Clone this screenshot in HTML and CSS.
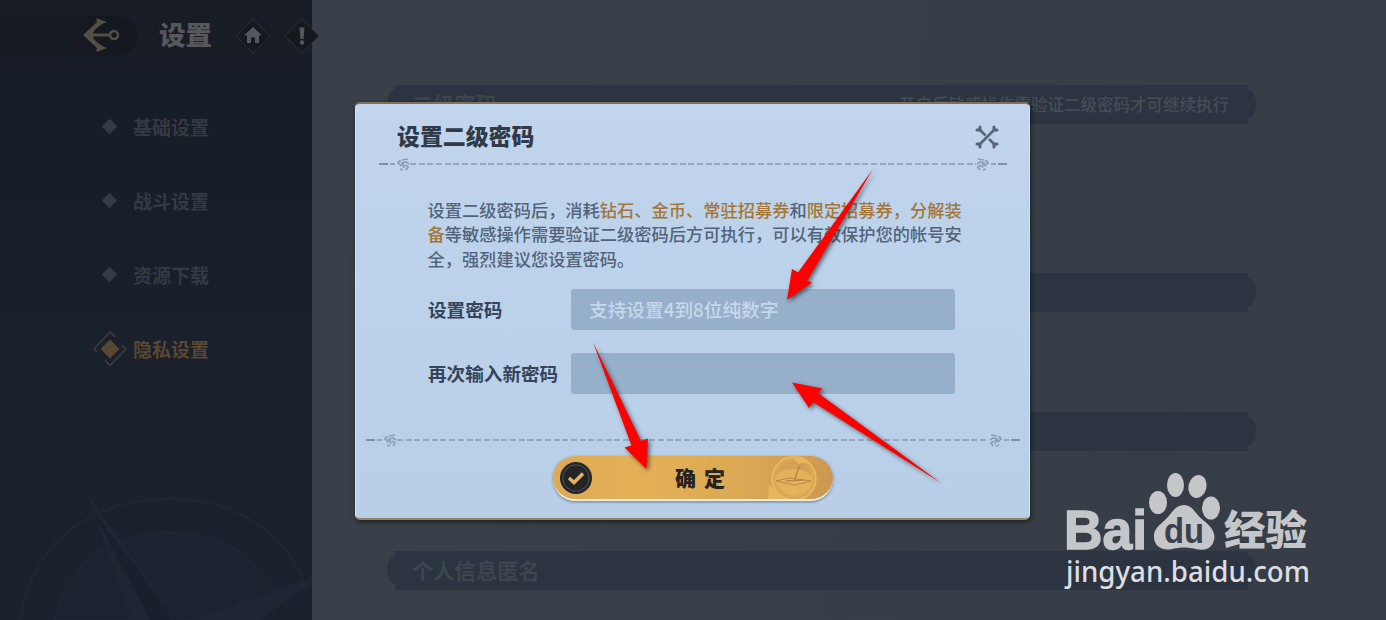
FILE: index.html
```
<!DOCTYPE html>
<html lang="zh-CN">
<head>
  <meta charset="UTF-8">
  <meta name="viewport" content="width=device-width, initial-scale=1.0">
  <title>设置二级密码</title>
  <link rel="stylesheet" href="styles.css">
</head>
<body>
  <div class="screen">
    <aside class="sidebar">
      <svg class="compass" viewBox="0 0 312 160">
        <path d="M20 160C35 75 95 39 172 39C236 39 282 72 303 118" fill="none" stroke="#1f2732" stroke-width="2"/>
        <path d="M55 160C70 95 115 73 172 73C218 73 252 92 270 128L200 160Z" fill="#1c2330" stroke="#1e2632" stroke-width="2"/>
        <path d="M88 36L177 160H131Z" fill="#1e2533"/>
        <path d="M92 50L177 160H150Z" fill="#19202b"/>
        <path d="M195 160L312 116V122L258 160Z" fill="#1e2533"/>
        <path d="M88 36L174 160M258 160L312 121" stroke="#212a36" fill="none"/>
      </svg>
      <header class="top-bar">
        <div class="back">
          <svg width="38" height="36" viewBox="0 0 38 36">
            <path d="M1 18L15 5L14 1L25 5Q19 7 16 10Q11 14 11 16.500H28V19.500H11Q11 22 16 26Q19 29 25 31L14 35L15 31Z" fill="#534f45"/>
            <circle cx="32" cy="18" r="4" fill="none" stroke="#534f45" stroke-width="2.5"/>
          </svg>
        </div>
        <h1>设置</h1>
        <svg class="top-icon" width="36" height="36" viewBox="0 0 36 36">
          <path d="M18 1L35 18L18 35L1 18Z" fill="#15181e" stroke="#292c32"/>
          <path d="M18 9L27 17.500H24V25H20V19.500H16V25H12V17.500H9Z" fill="#56585b"/>
        </svg>
        <svg class="top-icon" width="36" height="36" viewBox="0 0 36 36">
          <path d="M18 1L35 18L18 35L1 18Z" fill="#15181e" stroke="#2c3036"/>
          <path d="M15.500 9.500H20.500L19.500 21H16.500Z" fill="#56585b"/>
          <circle cx="18" cy="24.500" r="2.200" fill="#56585b"/>
        </svg>
      </header>
      <nav class="menu">
        <div class="menu-item"><span class="diamond"></span>基础设置</div>
        <div class="menu-item"><span class="diamond"></span>战斗设置</div>
        <div class="menu-item"><span class="diamond"></span>资源下载</div>
        <div class="menu-item active">
          <svg class="marker" width="34" height="36" viewBox="0 0 34 36">
            <path d="M17 8.500L26.500 18L17 27.500L7.500 18Z" fill="#594730"/>
            <path d="M4 21L1 18L17 1L22 6M29 14L33 18L17 34.500L12 29" fill="none" stroke="#46403a" stroke-width="1.300"/>
          </svg>隐私设置
        </div>
      </nav>
    </aside>

    <main class="content">
      <section class="setting tall"><div class="bar"><span>二级密码</span><small>开启后敏感操作需验证二级密码才可继续执行</small></div></section>
      <section class="setting"><div class="bar"></div></section>
      <section class="setting"><div class="bar"></div></section>
      <section class="setting last"><div class="bar"><span>个人信息匿名</span></div></section>
    </main>

    <div class="dialog">
      <div class="dialog-header">
        <h2>设置二级密码</h2>
        <svg class="close" width="24" height="24" viewBox="0 0 24 24">
          <path d="M4 4L10.500 10.500M14 14L20 20M20 4L4 20" stroke="#56657a" stroke-width="2.600"/>
          <path d="M2 5H5V2M19 2V5H22M2 19H5V22M19 22V19H22" fill="none" stroke="#56657a" stroke-width="3" stroke-linecap="round" stroke-linejoin="round"/>
        </svg>
      </div>
      <div class="divider">
        <i></i><svg class="knot" width="13" height="13" viewBox="0 0 13 13"><use href="#rope"/></svg><b></b><svg class="knot flip" width="13" height="13" viewBox="0 0 13 13"><use href="#rope"/></svg><i class="end"></i>
      </div>
      <p class="notice">设置二级密码后，消耗<em>钻石、金币、常驻招募券</em>和<em>限定招募券，分解装</em><br><em>备</em>等敏感操作需要验证二级密码后方可执行，可以有效保护您的帐号安<br>全，强烈建议您设置密码。</p>
      <form>
        <div class="form-group">
          <label for="password">设置密码</label>
          <input type="text" id="password" placeholder="支持设置4到8位纯数字">
        </div>
        <div class="form-group">
          <label for="confirm">再次输入新密码</label>
          <input type="text" id="confirm">
        </div>
      </form>
      <div class="divider wide">
        <i></i><svg class="knot" width="13" height="13" viewBox="0 0 13 13"><use href="#rope"/></svg><b></b><svg class="knot flip" width="13" height="13" viewBox="0 0 13 13"><use href="#rope"/></svg><i class="end"></i>
      </div>
      <button type="button" class="confirm">
        <svg class="check" width="32" height="32" viewBox="0 0 32 32">
          <circle cx="16" cy="16" r="16" fill="#24252a"/>
          <circle cx="16" cy="16" r="13.200" fill="none" stroke="#55524c"/>
          <path d="M9 16L14 20.500L23 11.500" fill="none" stroke="#e6b157" stroke-width="3.500"/>
        </svg>
        <span>确 定</span>
        <svg class="emblem" width="50" height="43" viewBox="0 0 50 43">
          <path d="M1 29L11 37L15 43H0Z" fill="#e6b65d"/>
          <circle cx="26" cy="22.500" r="21.500" fill="#d3a153" stroke="#e6b65d" stroke-width="2.500"/>
          <path d="M7.500 21.500C13 10 38 10 44.500 21.500C44 46 8 46 7.500 21.500Z" fill="#e3b25a"/>
          <circle cx="26" cy="22.500" r="18.500" fill="none" stroke="#e3b25a"/>
          <path d="M8 25L22 22L43 25L27 29Z" fill="#e6b65d" stroke="#b88945"/>
          <path d="M18 25L36 24M32 9L26 25" stroke="#b88945" stroke-width="1.500"/>
          <path d="M25 2L30 8L39 6L35 1Z" fill="#e6b65d"/>
        </svg>
      </button>
    </div>

    <svg class="defs" width="0" height="0">
      <g id="rope" fill="none" stroke="#8a9fb7" stroke-width="1.700">
        <path d="M1 6Q1 2 4 3M5 2L11 1M4 5L9 4L12 6M3 8L6 6L7 10M8 7L11 9L9 12M3 11L6 12M1 4L3 7"/>
      </g>
    </svg>

    <svg class="arrows" viewBox="0 0 1386 620">
      <path d="M873 169L807 281L812 282.500L787 300L792 269L798 272.500Z"/>
      <path d="M593 342L641 441L648 438.500L646.500 469L624.500 447.500L631.500 445.500Z"/>
      <path d="M941 483L813 402L809 408L792 382.500L822.500 388.500L818 393Z"/>
    </svg>

    <svg class="watermark" width="250" height="120" viewBox="0 0 250 120">
      <g fill="#c4c6ca">
        <text class="logo-text" x="1" y="79" font-size="56" textLength="83" lengthAdjust="spacingAndGlyphs">Bai</text>
        <ellipse cx="95" cy="32.500" rx="9" ry="11.500"/>
        <ellipse cx="112.500" cy="15" rx="8.500" ry="12"/>
        <ellipse cx="134.500" cy="16.500" rx="9" ry="11.500" transform="rotate(14 134.500 16.500)"/>
        <ellipse cx="148" cy="38" rx="9" ry="11.500"/>
        <path d="M121 35C130 35 132 44 140 50C148 56 153 63 151 70C149 79 141 81 133 79C124 77 118 77 109 79C100 81 92 77 91 68C90 59 97 55 103 49C109 43 112 35 121 35Z"/>
        <text class="logo-cn" x="161" y="75" font-size="41" textLength="83" lengthAdjust="spacingAndGlyphs">经验</text>
      </g>
      <text class="logo-du" x="101" y="73" font-size="35" textLength="40" lengthAdjust="spacingAndGlyphs">du</text>
      <text class="logo-url" x="3" y="112" font-size="29" textLength="244" lengthAdjust="spacingAndGlyphs">jingyan.baidu.com</text>
    </svg>
  </div>
</body>
</html>
```
FILE: styles.css
```
* {
  box-sizing: border-box;
}

body {
  margin: 0;
  font-family: "Noto Sans CJK SC", sans-serif;
  background: #373e48;
  overflow: hidden;
}

h1,
h2,
p {
  margin: 0;
}

.screen {
  position: relative;
  display: flex;
  width: 1386px;
  height: 620px;
}

/* Sidebar */
.sidebar {
  position: relative;
  width: 312px;
  background: linear-gradient(#171c25, #18202a 50%, #1b222d);
}

.compass {
  position: absolute;
  left: 0;
  bottom: 0;
  width: 312px;
  height: 160px;
}

.top-bar {
  display: flex;
  align-items: center;
  width: 340px;
  height: 71px;
}

.back {
  flex: none;
  width: 137px;
  height: 40px;
  padding: 1px 0 0 82px;
  background: linear-gradient(90deg, #171b24, #14171e);
  border-radius: 0 20px 20px 0;
}

.top-bar h1 {
  flex: none;
  width: 98px;
  padding: 0 0 3px 22px;
  font-size: 26.5px;
  font-weight: 900;
  line-height: 38px;
  color: #56585b;
}

.top-icon {
  flex: none;
  margin-right: 13px;
}

.menu {
  margin-top: 19px;
}

.menu-item {
  display: flex;
  align-items: center;
  height: 74.200px;
  padding: 0 0 2px 104px;
  font-size: 19px;
  font-weight: bold;
  color: #343a43;
}

.diamond {
  width: 11px;
  height: 11px;
  margin: 1px 18px 0 0;
  background: #343b47;
  transform: rotate(45deg);
}

.active {
  padding-left: 93px;
  background: #1a212d;
  color: #594730;
}

.marker {
  margin-right: 6px;
}

/* Settings list behind the dialog */
.content {
  flex: 1;
  padding: 85px 0 0 83px;
  background: linear-gradient(100deg, #394049, #363d47);
}

.setting {
  height: 139px;
}

.tall {
  height: 188px;
}

.last {
  height: 60px;
}

.bar {
  position: relative;
  display: flex;
  align-items: center;
  justify-content: space-between;
  width: 853px;
  height: 38.500px;
  padding: 0 19px 1px 17px;
  background: #2b3440;
  font-size: 21.300px;
  font-weight: bold;
  color: #3e454e;
}

.bar::before,
.bar::after {
  content: "";
  position: absolute;
  top: 5px;
  left: -8px;
  width: 8px;
  height: 28px;
  background: #2b3440;
  border-radius: 8px 0 0 8px / 14px 0 0 14px;
}

.bar::after {
  left: auto;
  right: -8px;
  transform: scaleX(-1);
}

.bar small {
  font-size: 16.500px;
  font-weight: 500;
  color: #464d57;
}

/* Dialog */
.dialog {
  position: absolute;
  left: 355px;
  top: 102px;
  width: 675px;
  height: 418px;
  background: linear-gradient(#c1d5ec, #bbd2ea 45%, #b8cfe7);
  border-top: 2px solid #84705a;
  border-bottom: 2px solid #948565;
  border-radius: 5px;
  box-shadow: 1px 2px 5px rgba(0, 0, 0, 0.5), inset 1px 0 #d2e2f2, inset -1px 0 #d2e2f2;
}

.dialog-header {
  display: flex;
  align-items: center;
  justify-content: space-between;
  height: 53px;
  padding: 12px 31px 0 42px;
}

.dialog-header h2 {
  padding-bottom: 3px;
  font-size: 22.900px;
  font-weight: 900;
  line-height: 30px;
  color: #303a48;
}

.divider {
  display: flex;
  align-items: center;
  height: 14px;
  margin: 0 23px 0 24px;
}

.divider i {
  width: 18px;
  height: 2px;
  background: linear-gradient(90deg, #7f91a8 9px, transparent 9px, transparent 11px, #91a5bd 11px, #91a5bd 16px, transparent 16px);
}

.divider .end {
  transform: scaleX(-1);
}

.divider b {
  flex: 1;
  height: 2px;
  background: repeating-linear-gradient(90deg, #94a8c0 0, #94a8c0 6px, transparent 6px, transparent 8.700px);
}

.flip {
  transform: scaleX(-1);
}

.notice {
  height: 73px;
  margin: 27px 0 0 72.500px;
  font-size: 17.240px;
  font-weight: 500;
  line-height: 24.300px;
  color: #52647b;
  white-space: nowrap;
}

.notice em {
  font-style: normal;
  color: #a4763a;
}

.form-group {
  display: flex;
  align-items: center;
  height: 41px;
  margin: 18px 0 0 73px;
}

.form-group + .form-group {
  margin-top: 23px;
}

label {
  width: 143px;
  padding-bottom: 2px;
  font-size: 18.600px;
  font-weight: bold;
  color: #34445a;
}

input {
  width: 384px;
  height: 41px;
  padding: 0 18px 2px;
  border: 0;
  border-radius: 3px;
  background: #96b0cb;
  font-family: inherit;
  font-size: 18.700px;
  font-weight: 500;
}

input::placeholder {
  color: #c7d8ea;
}

.wide {
  margin: 39px 10px 0 11px;
}

.confirm {
  display: flex;
  align-items: center;
  width: 280px;
  height: 45px;
  margin: 9px 0 0 198px;
  padding: 0 15px 0 7px;
  border: 0;
  border-bottom: 2px solid #f6efdc;
  border-radius: 23px;
  background: linear-gradient(90deg, #dda955, #e4b057 30%, #dca954 65%, #cb9850);
  box-shadow: 0 1px 3px rgba(50, 65, 85, 0.6);
}

.confirm span {
  flex: 1;
  padding: 0 0 2px 40px;
  font-family: "Noto Sans CJK SC", sans-serif;
  font-size: 21px;
  font-weight: 900;
  text-align: center;
  word-spacing: 3px;
  color: #25231f;
}

/* Pointers over the dialog */
.arrows {
  position: absolute;
  left: 0;
  top: 0;
  width: 1386px;
  height: 620px;
  fill: #fe0000;
  filter: drop-shadow(2px 2px 2px rgba(30, 30, 40, 0.65));
}

.defs {
  position: absolute;
}

.watermark {
  position: absolute;
  left: 1063px;
  top: 470px;
}

.logo-text,
.logo-du {
  font-family: "Liberation Sans", sans-serif;
  font-weight: bold;
}

.logo-text {
  stroke: #c4c6ca;
  stroke-width: 1.5px;
}

.logo-du {
  fill: #3a414b;
}

.logo-cn {
  font-weight: 900;
}

.logo-url {
  font-family: "Noto Sans", sans-serif;
  font-weight: 500;
  fill: #dcdee2;
}
```
